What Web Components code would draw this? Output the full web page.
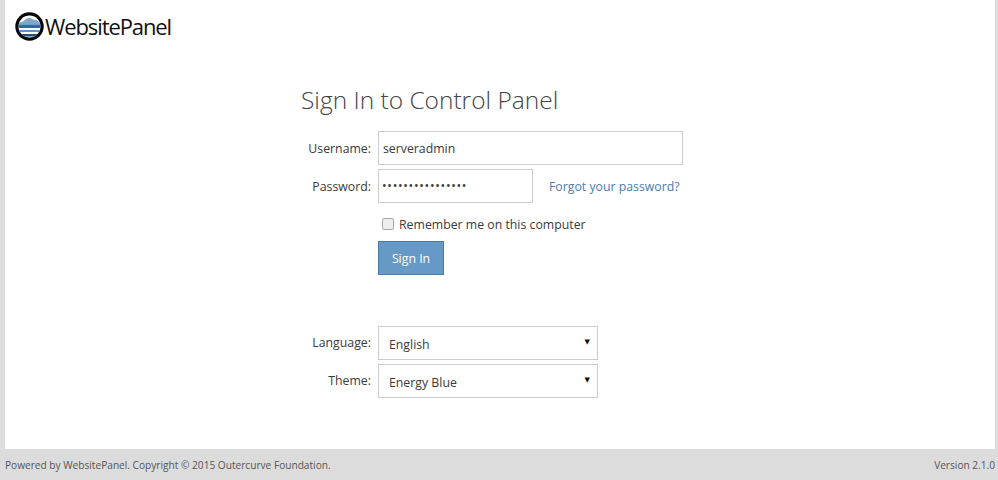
<!DOCTYPE html>
<html>
<head>
<meta charset="utf-8">
<title>Sign In to Control Panel</title>
<style>
html, body { margin: 0; height: 100%; }
body { font-family: "Open Sans", "Noto Sans", sans-serif; }
</style>
</head>
<body>
<wp-page>
  <wp-logo slot="header"></wp-logo>
  <wp-signin></wp-signin>
  <wp-footer slot="footer"></wp-footer>
</wp-page>

<script>
class WpPage extends HTMLElement {
    connectedCallback() {
        this.attachShadow({ mode: 'open' });
        this.shadowRoot.innerHTML = `
            <style>
                :host {
                    display: flex;
                    flex-direction: column;
                    height: 480px;
                    background: #dcdcdc;
                }
                .content {
                    flex: 1;
                    background: #fff;
                    margin: 0 3px 0 5px;
                    padding: 12px 0 0 10px;
                }
                .main {
                    padding: 42px 0 0 286px;
                }
            </style>
            <div class="content">
                <slot name="header"></slot>
                <div class="main"><slot></slot></div>
            </div>
            <slot name="footer"></slot>
        `;
    }
}

class WpLogo extends HTMLElement {
    connectedCallback() {
        this.attachShadow({ mode: 'open' });
        this.shadowRoot.innerHTML = `
            <style>
                :host {
                    display: flex;
                    align-items: center;
                    gap: 1px;
                    height: 29px;
                }
                svg { display: block; flex: none; }
                span {
                    font: 400 22px/29px "Open Sans", sans-serif;
                    letter-spacing: -1.1px;
                    color: #111;
                }
            </style>
            <svg width="29" height="29" viewBox="0 0 29 29">
                <defs><clipPath id="c"><circle cx="14.5" cy="14.5" r="11"/></clipPath></defs>
                <circle cx="14.5" cy="14.5" r="14.2" fill="#050505"/>
                <g clip-path="url(#c)">
                    <rect width="29" height="29" fill="#fff"/>
                    <path d="M2 12.5 C5 9.5 7 10 9 9 C11 5.5 16 5 18 7.5 C21 7 24 9.5 27 12.5 Z" fill="#7fa6cb"/>
                    <rect y="12.5" width="29" height="3.5" fill="#2f6ba3"/>
                    <rect y="18" width="29" height="2" fill="#5d90be"/>
                    <rect y="22" width="29" height="2.5" fill="#1f4f80"/>
                </g>
            </svg>
            <span>WebsitePanel</span>
        `;
    }
}

class WpField extends HTMLElement {
    connectedCallback() {
        const label = this.getAttribute('label');
        const width = this.getAttribute('width');
        const arrow = this.hasAttribute('select');
        this.attachShadow({ mode: 'open' });
        this.shadowRoot.innerHTML = `
            <style>
                :host {
                    display: grid;
                    grid-template-columns: 70px max-content auto;
                    column-gap: 7px;
                    align-items: center;
                    font-size: 12.3px;
                    color: #3a3a3a;
                }
                label { text-align: right; position: relative; top: ${arrow ? -1 : 0}px; }
                .box {
                    box-sizing: border-box;
                    height: 34px;
                    width: ${width}px;
                    border: 1px solid #ccc;
                    background: #fff;
                    display: flex;
                    align-items: center;
                    justify-content: space-between;
                    padding: ${arrow ? '3px 7px 0 10px' : '2px 9px 0 4px'};
                    line-height: 28px;
                    white-space: nowrap;
                }
                .arrow { font-size: 7px; color: #111; font-family: "DejaVu Sans", sans-serif; position: relative; top: -3px; }
                .after { margin-left: 9px; }
            </style>
            <label>${label}</label>
            <div class="box"><span><slot></slot></span>${arrow ? '<span class="arrow">▼</span>' : ''}</div>
            <div class="after"><slot name="after"></slot></div>
        `;
    }
}

class WpSignin extends HTMLElement {
    connectedCallback() {
        this.attachShadow({ mode: 'open' });
        this.shadowRoot.innerHTML = `
            <style>
                :host { display: block; }
                h1 {
                    margin: 0 0 15px;
                    font-size: 24.5px;
                    font-weight: 300;
                    line-height: 33px;
                    color: #444;
                }
                .rows { display: flex; flex-direction: column; gap: 4px; }
                .languages { margin-top: 51px; }
                .remember {
                    display: flex;
                    align-items: center;
                    gap: 5px;
                    height: 20px;
                    margin: 11px 0 7px 81px;
                    font-size: 12.3px;
                    color: #3a3a3a;
                }
                .check {
                    box-sizing: border-box;
                    width: 12px;
                    height: 12px;
                    border: 1px solid #a6a6a6;
                    border-radius: 2px;
                    background: #eee;
                    margin-top: -1px;
                }
                button {
                    display: block;
                    box-sizing: border-box;
                    width: 66px;
                    height: 34px;
                    margin-left: 77px;
                    padding: 0;
                    border: 1px solid #4b7aa5;
                    border-radius: 0;
                    background: #6699c6;
                    color: #fff;
                    font: 12.3px "Open Sans", sans-serif;
                }
                a { color: #4a7cb0; text-decoration: none; font-size: 12.3px; }
                .dots { letter-spacing: 0.7px; margin-left: -1px; position: relative; top: -1px; }
            </style>
            <h1>Sign In to Control Panel</h1>
            <div class="rows">
                <wp-field label="Username:" width="305">serveradmin</wp-field>
                <wp-field label="Password:" width="155">
                    <span class="dots">••••••••••••••••</span>
                    <a slot="after" href="#">Forgot your password?</a>
                </wp-field>
            </div>
            <div class="remember"><span class="check"></span><span>Remember me on this computer</span></div>
            <button type="button">Sign In</button>
            <div class="rows languages">
                <wp-field label="Language:" width="220" select>English</wp-field>
                <wp-field label="Theme:" width="220" select>Energy Blue</wp-field>
            </div>
        `;
    }
}

class WpFooter extends HTMLElement {
    connectedCallback() {
        this.attachShadow({ mode: 'open' });
        this.shadowRoot.innerHTML = `
            <style>
                :host {
                    display: flex;
                    justify-content: space-between;
                    align-items: center;
                    height: 31px;
                    padding: 0 3px 0 5px;
                    font-size: 10.15px;
                    color: #555;
                }
            </style>
            <span>Powered by WebsitePanel. Copyright © 2015 Outercurve Foundation.</span>
            <span>Version 2.1.0</span>
        `;
    }
}

customElements.define('wp-page', WpPage);
customElements.define('wp-logo', WpLogo);
customElements.define('wp-field', WpField);
customElements.define('wp-signin', WpSignin);
customElements.define('wp-footer', WpFooter);
</script>
</body>
</html>
